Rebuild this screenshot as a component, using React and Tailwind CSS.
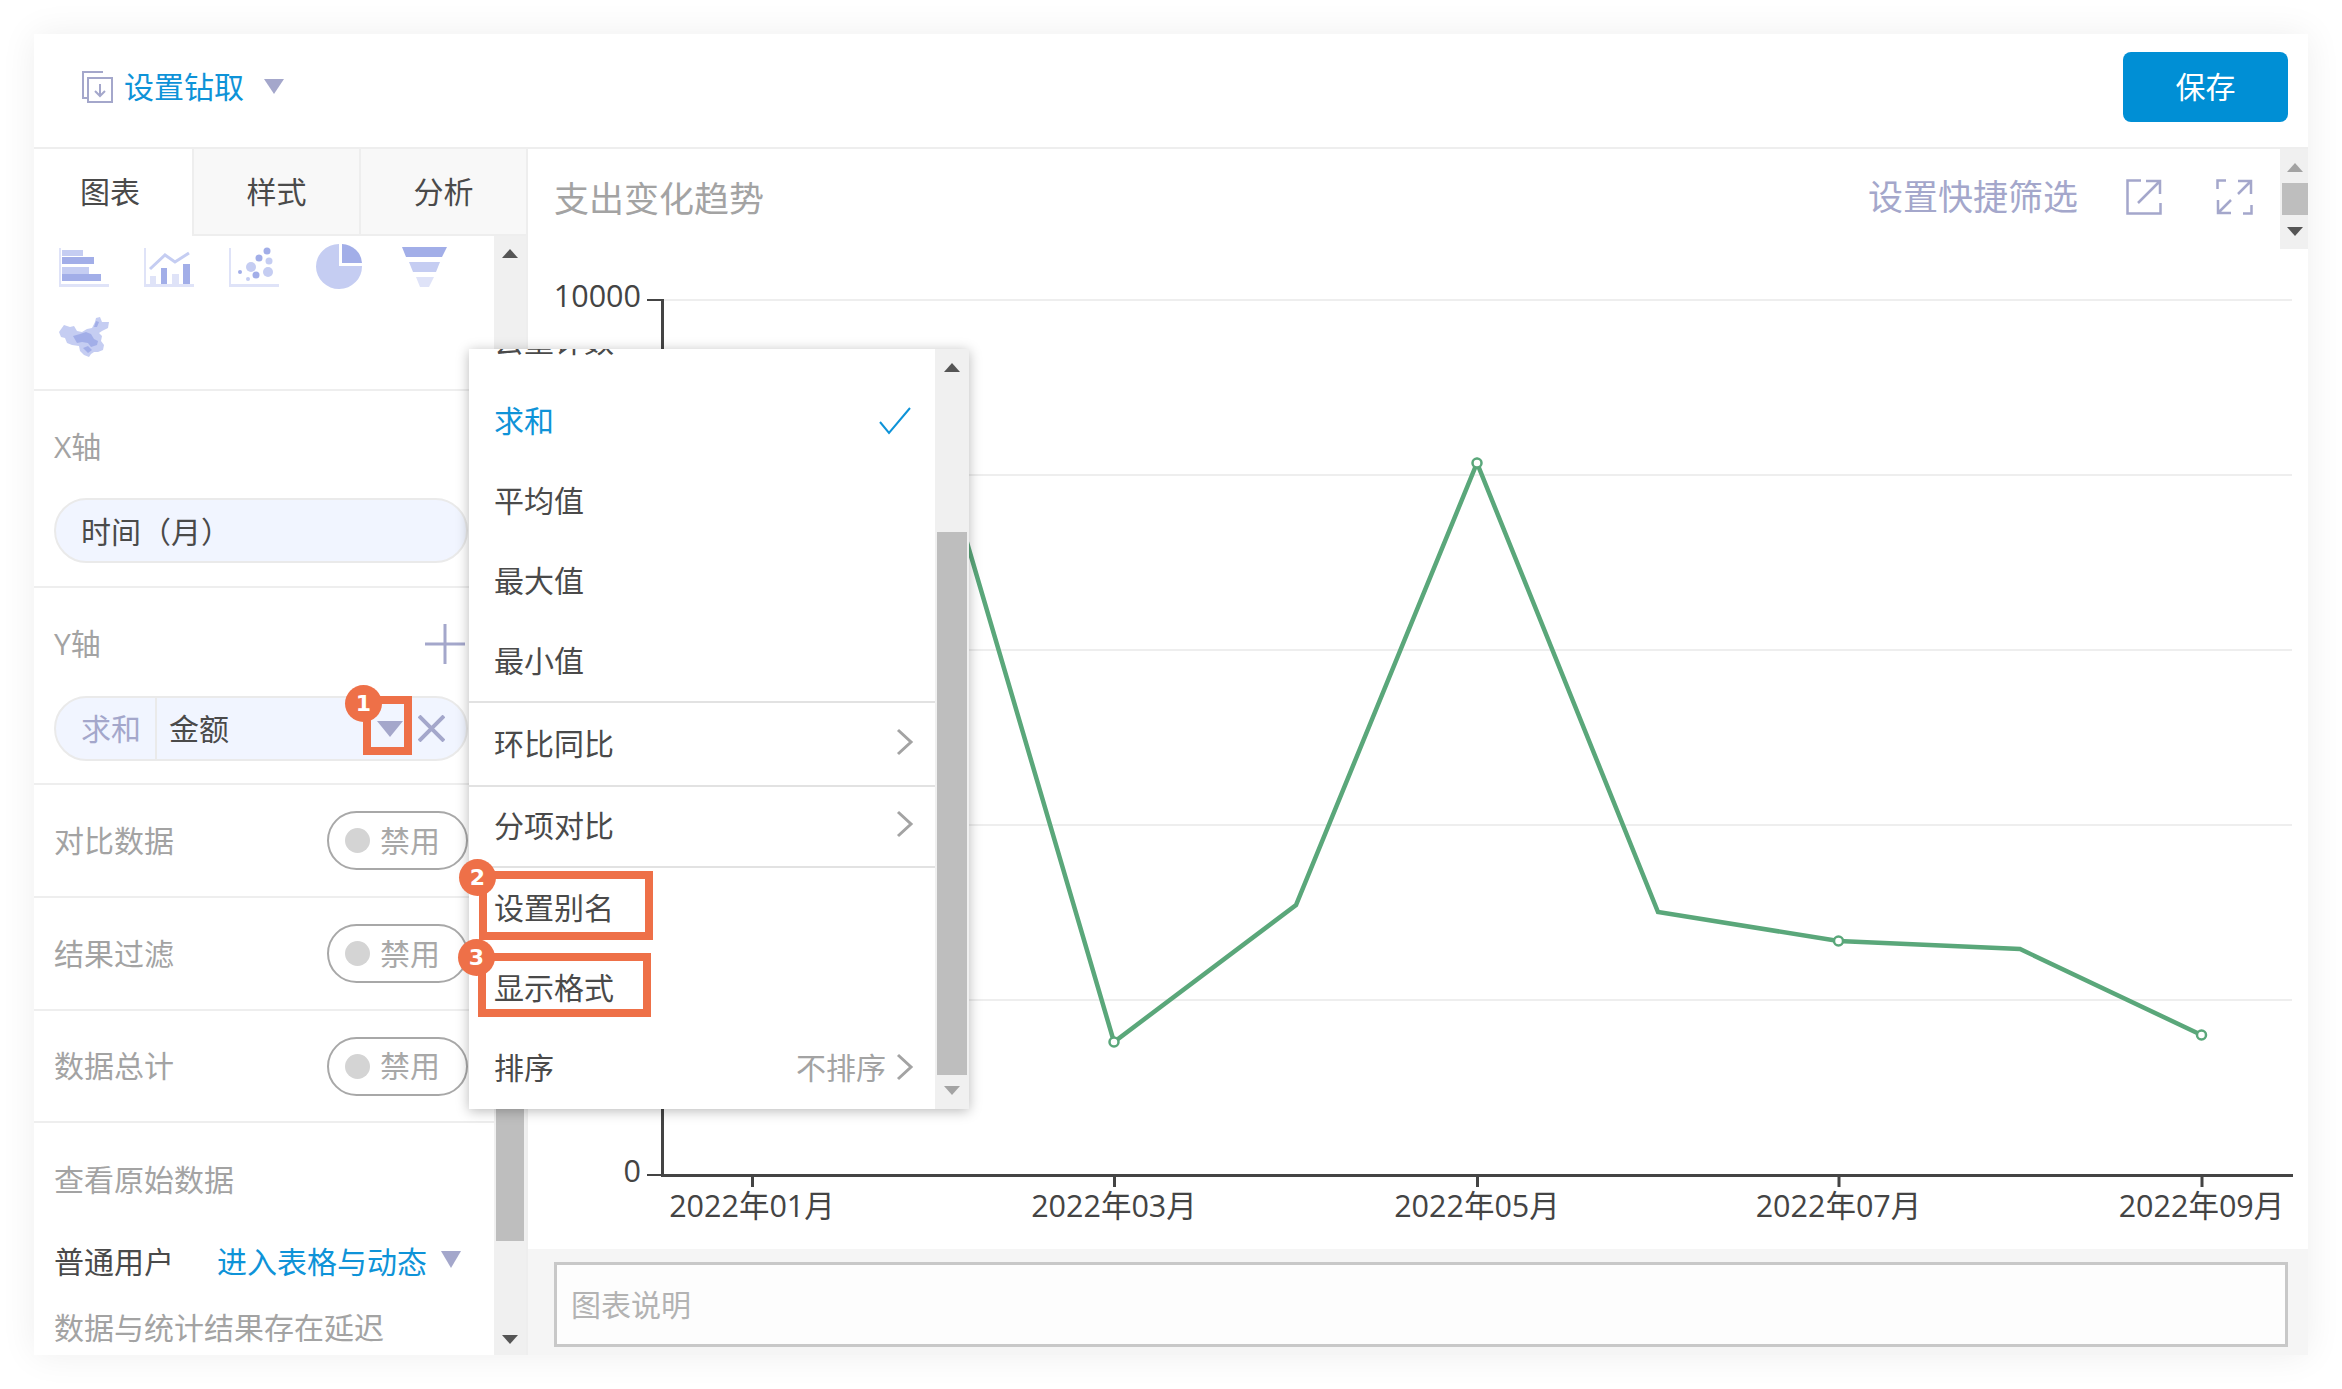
const FONT = '"Open Sans", "Noto Sans CJK SC", sans-serif';

function Tri({ w = 20, h = 15, up, className }) {
  return (
    <svg width={w} height={h} viewBox="0 0 20 15" preserveAspectRatio="none" className={className}>
      <polygon points={up ? "0,15 20,15 10,0" : "0,0 20,0 10,15"} fill="currentColor" />
    </svg>
  );
}

function Chevron({ className = "" }) {
  return (
    <svg width="18" height="28" viewBox="0 0 18 28" className={`text-[#a3a3a3] ${className}`}>
      <polyline points="2,2 15,14 2,26" fill="none" stroke="currentColor" strokeWidth="3" />
    </svg>
  );
}

function Toggle() {
  return (
    <div className="flex h-[59px] w-[141px] items-center rounded-full border-2 border-[#a8a8a8] pl-[16px]">
      <span className="h-[25px] w-[25px] rounded-full bg-[#d4d4d4]" />
      <span className="ml-[10px] text-[30px] leading-[40px] text-[#a8a8a8]">禁用</span>
    </div>
  );
}

function ToggleRow({ label, h = "h-[113px]" }) {
  return (
    <div className={`flex ${h} items-center justify-between border-b-2 border-[#eeeeee] pl-[20px] pr-[26px]`}>
      <span className="text-[30px] leading-[40px] text-[#a3a3a3]">{label}</span>
      <Toggle />
    </div>
  );
}

// chart type icons, all in a 50x50 cell
function BarIcon() {
  return (
    <svg width="50" height="50" viewBox="0 0 50 50">
      <rect x="0" y="6" width="2" height="39" fill="#dfe3f8" />
      <rect x="0" y="42" width="50" height="3" fill="#dfe3f8" />
      <rect x="3" y="8" width="21" height="6" fill="#c5cdf2" />
      <rect x="3" y="15" width="32" height="7" fill="#a2aee8" />
      <rect x="3" y="25" width="27" height="7" fill="#c5cdf2" />
      <rect x="3" y="32" width="39" height="7" fill="#a2aee8" />
    </svg>
  );
}

function LineIcon() {
  return (
    <svg width="50" height="50" viewBox="0 0 50 50">
      <rect x="0" y="6" width="2" height="39" fill="#dfe3f8" />
      <rect x="0" y="42" width="50" height="3" fill="#dfe3f8" />
      <rect x="6" y="34" width="6" height="8" fill="#dfe3f8" />
      <rect x="17" y="26" width="6" height="16" fill="#a2aee8" />
      <rect x="28" y="32" width="7" height="10" fill="#dfe3f8" />
      <rect x="39" y="22" width="7" height="20" fill="#a2aee8" />
      <polyline points="6,27 21,13 31,20 45,11" fill="none" stroke="#c5cdf2" strokeWidth="3" />
    </svg>
  );
}

function DotsIcon() {
  return (
    <svg width="50" height="50" viewBox="0 0 50 50">
      <rect x="0" y="6" width="2" height="39" fill="#dfe3f8" />
      <rect x="0" y="42" width="50" height="3" fill="#dfe3f8" />
      <circle cx="38" cy="9" r="3.500" fill="#a2aee8" />
      <circle cx="30" cy="16" r="3.500" fill="#a2aee8" />
      <circle cx="40" cy="19" r="3.500" fill="#c5cdf2" />
      <circle cx="22" cy="25" r="5" fill="#c5cdf2" />
      <circle cx="39" cy="30" r="5" fill="#c5cdf2" />
      <circle cx="11" cy="30" r="2" fill="#a2aee8" />
      <circle cx="27" cy="33" r="3.500" fill="#a2aee8" />
      <circle cx="19" cy="37" r="2" fill="#c5cdf2" />
    </svg>
  );
}

function PieIcon() {
  return (
    <svg width="50" height="50" viewBox="0 0 50 50">
      <path d="M25 2 A23 22.500 0 1 0 48 24 L25 24 Z" fill="#c5cdf2" />
      <path d="M28 2 A21 20 0 0 1 48 21 L28 21 Z" fill="#a2aee8" />
    </svg>
  );
}

function FunnelIcon() {
  return (
    <svg width="50" height="50" viewBox="0 0 50 50">
      <polygon points="3,5 48,5 43,15 7,15" fill="#a2aee8" />
      <polygon points="10,20 41,20 37,30 14,30" fill="#c5cdf2" />
      <polygon points="17,35 35,35 30,45 21,45" fill="#dfe3f8" />
    </svg>
  );
}

function MapIcon() {
  return (
    <svg width="50" height="50" viewBox="0 -5 50 50">
      <path d="M0 15 L5 8 L11 10 L15 9 L18 14 L23 15 L28 12 L33 11 L36 5 L37 1 L41 0 L43 5 L50 5 L49 11 L43 14 L40 16 L43 19 L42 24 L45 28 L44 33 L39 35 L35 35 L32 37 L30 40 L25 38 L21 34 L20 29 L13 28 L8 26 L6 21 L2 20 Z" fill="#c5cdf2" />
      <path d="M14 19 L21 17 L27 15 L32 17 L35 22 L39 24 L38 28 L32 30 L29 26 L23 25 L18 26 Z" fill="#a2aee8" />
      <path d="M24 31 L29 29 L33 33 L29 36 Z" fill="#a2aee8" />
      <path d="M37 4 L40 5 L38 10 L35 10 Z" fill="#a2aee8" />
    </svg>
  );
}

function DrillIcon() {
  return (
    <svg width="31" height="32" viewBox="0 0 31 32" fill="none" stroke="#a4a7cb" strokeWidth="2">
      <path d="M21 1 H1 V27 H5" />
      <rect x="6" y="7" width="24" height="24" />
      <path d="M18 13 V25 M13 20 L18 25 L23 20" />
    </svg>
  );
}

function OpenIcon() {
  return (
    <svg width="36" height="36" viewBox="0 0 36 36" fill="none" stroke="#a4a7cb" strokeWidth="2.500">
      <path d="M15 1.500 H1.500 V34.500 H34.500 V24" />
      <path d="M12 24 L33 3 M20 2 H34 V15" />
    </svg>
  );
}

function ExpandIcon() {
  return (
    <svg width="37" height="36" viewBox="0 0 37 36" fill="none" stroke="#a4a7cb" strokeWidth="2.500">
      <path d="M10 1.500 H1.500 V10 M27 34.500 H35.500 V26" />
      <path d="M22 2 H35 V15 M35 2 L22 15" />
      <path d="M2 21 V34 H15 M2 34 L15 21" />
    </svg>
  );
}

function MenuItem({ label, active, check, h = "h-[80px]", pad = "", children }) {
  return (
    <div className={`flex ${h} ${pad} shrink-0 items-center justify-between pl-[25px] pr-[21px]`}>
      <span className={`text-[30px] leading-[40px] ${active ? "text-[#0e93d8]" : "text-[#4a4a4a]"}`}>{label}</span>
      {check && (
        <svg width="32" height="28" viewBox="0 0 32 28" className="mr-[3px]">
          <polyline points="1,15 10,26 31,1" fill="none" stroke="#0e93d8" strokeWidth="2" />
        </svg>
      )}
      {children}
    </div>
  );
}

function Badge({ n, className }) {
  return (
    <div
      className={`absolute flex h-[37px] w-[37px] items-center justify-center rounded-full bg-[#ee7048] text-[22px] font-bold leading-none text-white ${className}`}
      style={{ fontFamily: '"DejaVu Sans", sans-serif' }}
    >
      {n}
    </div>
  );
}

const points = [
  [752, 520],
  [933, 427],
  [1114, 1042],
  [1296, 905],
  [1477, 463],
  [1658, 912],
  [1838.5, 941],
  [2020, 949],
  [2201.5, 1035],
];
const gridY = [300, 475, 650, 825, 1000];
const months = [
  [752, "2022年01月"],
  [1114, "2022年03月"],
  [1477, "2022年05月"],
  [1838.5, "2022年07月"],
  [2201.5, "2022年09月"],
];

function Chart() {
  return (
    <svg width="1780" height="1000" viewBox="528 249 1780 1000" className="block" style={{ fontFamily: FONT }}>
      {gridY.map((y) => (
        <rect key={y} x="662" y={y - 1} width="1630" height="2" fill="#eeeeee" />
      ))}
      <rect x="661" y="299" width="3" height="877" fill="#444444" />
      <rect x="647" y="299" width="15" height="2" fill="#444444" />
      <rect x="647" y="1174" width="15" height="2" fill="#444444" />
      <rect x="661" y="1174" width="1632" height="3" fill="#444444" />
      <text x="641" y="307" textAnchor="end" fontSize="30.5" fill="#444444">10000</text>
      <text x="641" y="1182" textAnchor="end" fontSize="30.5" fill="#444444">0</text>
      {months.map(([x, label]) => (
        <g key={x}>
          <rect x={x - 1} y="1175" width="3" height="12" fill="#444444" />
          <text x={x} y="1217" textAnchor="middle" fontSize="30.5" fill="#444444">{label}</text>
        </g>
      ))}
      <polyline points={points.map((p) => p.join(",")).join(" ")} fill="none" stroke="#5aa77a" strokeWidth="4.500" />
      {points.map(([x, y], i) =>
        i % 2 === 0 ? <circle key={x} cx={x} cy={y} r="4.500" fill="white" stroke="#5aa77a" strokeWidth="2.500" /> : null
      )}
    </svg>
  );
}

export default function App() {
  return (
    <div className="h-[1389px] w-[2342px] overflow-hidden bg-white pl-[34px] pt-[34px]" style={{ fontFamily: FONT }}>
      <div className="relative flex h-[1321px] w-[2274px] flex-col bg-white shadow-[0_0_34px_rgba(0,0,0,0.07)]">
        {/* header */}
        <div className="flex h-[115px] shrink-0 items-center border-b-2 border-[#eeeeee] pb-[8px] pl-[48px] pr-[20px]">
          <DrillIcon />
          <span className="ml-[11px] text-[30px] leading-[40px] text-[#0e93d8]">设置钻取</span>
          <Tri className="ml-[20px] text-[#a4a7cb]" />
          <button className="ml-auto h-[70px] w-[165px] rounded-[8px] bg-[#008fd5] text-[30px] text-white">保存</button>
        </div>

        <div className="flex min-h-0 flex-1">
          {/* left panel */}
          <div className="flex w-[494px] shrink-0 flex-col border-r-2 border-[#eeeeee]">
            <div className="flex h-[87px] shrink-0 text-[30px] text-[#4a4a4a]">
              <div className="flex w-[160px] items-center justify-center border-r-2 border-[#eeeeee] pb-[3px] pr-[6px]">图表</div>
              <div className="flex w-[167px] items-center justify-center border-b-2 border-r-2 border-[#eeeeee] bg-[#f8f8f8] pb-[1px]">样式</div>
              <div className="flex flex-1 items-center justify-center border-b-2 border-[#eeeeee] bg-[#f8f8f8] pb-[1px]">分析</div>
            </div>
            <div className="flex min-h-0 flex-1">
              <div className="min-w-0 flex-1 overflow-hidden">
                <div className="flex h-[155px] flex-wrap content-start gap-x-[35px] gap-y-[20px] border-b-2 border-[#eeeeee] pl-[25px] pt-[6px]">
                  <BarIcon />
                  <LineIcon />
                  <DotsIcon />
                  <PieIcon />
                  <FunnelIcon />
                  <MapIcon />
                </div>
                <div className="h-[197px] border-b-2 border-[#eeeeee] pl-[20px] pr-[26px] pt-[36px]">
                  <div className="h-[40px] text-[30px] leading-[40px] text-[#a3a3a3]">X轴</div>
                  <div className="mt-[31px] flex h-[65px] items-center rounded-full border-2 border-[#eaeaea] bg-[#f1f5ff] pl-[25px] pt-[2px] text-[30px] text-[#4a4a4a]">时间（月）</div>
                </div>
                <div className="h-[197px] border-b-2 border-[#eeeeee] pl-[20px] pr-[26px] pt-[36px]">
                  <div className="flex h-[40px] items-center justify-between text-[30px] leading-[40px] text-[#a3a3a3]">
                    Y轴
                    <svg width="40" height="40" viewBox="0 0 40 40" className="mr-[3px]">
                      <path d="M20 0 V40 M0 20 H40" stroke="#a4a7cb" strokeWidth="3" />
                    </svg>
                  </div>
                  <div className="mt-[32px] flex h-[65px] items-center rounded-full border-2 border-[#eaeaea] bg-[#f1f5ff] text-[30px]">
                    <span className="flex h-full w-[101px] items-center justify-end border-r-2 border-[#eaeaea] pr-[14px] text-[#a4a7cb]">求和</span>
                    <span className="ml-[12px] text-[#4a4a4a]">金额</span>
                    <Tri w={26} h={16} className="ml-auto text-[#a4a7cb]" />
                    <svg width="27" height="27" viewBox="0 0 27 27" className="ml-[15px] mr-[21px]">
                      <path d="M1 1 L26 26 M26 1 L1 26" stroke="#a4a7cb" strokeWidth="4" />
                    </svg>
                  </div>
                </div>
                <ToggleRow label="对比数据" />
                <ToggleRow label="结果过滤" />
                <ToggleRow label="数据总计" h="h-[112px]" />
                <div className="mt-[37px] pl-[20px] text-[30px] leading-[40px] text-[#a3a3a3]">查看原始数据</div>
                <div className="mt-[42px] flex h-[40px] items-center pl-[20px] text-[30px] leading-[40px]">
                  <span className="text-[#4a4a4a]">普通用户</span>
                  <span className="ml-[43px] text-[#0e93d8]">进入表格与动态</span>
                  <Tri w={20} h={17} className="mb-[6px] ml-[14px] text-[#a4a7cb]" />
                </div>
                <div className="mt-[26px] whitespace-nowrap pl-[20px] text-[30px] leading-[40px] text-[#a3a3a3]">数据与统计结果存在延迟</div>
              </div>
              {/* left scrollbar */}
              <div className="flex w-[32px] shrink-0 flex-col items-center bg-[#f0f0f0] pt-[13px] text-[#555555]">
                <Tri up w={16} h={9} />
                <div className="mt-[300px] h-[683px] w-[28px] bg-[#bebebe]" />
                <Tri w={16} h={9} className="mt-[94px]" />
              </div>
            </div>
          </div>

          {/* chart panel */}
          <div className="flex min-w-0 flex-1 flex-col">
            <div className="flex h-[100px] shrink-0 items-center pl-[26px]">
              <span className="text-[35px] leading-[48px] text-[#a3a3a3]">支出变化趋势</span>
              <span className="mb-[4px] ml-auto text-[35px] leading-[48px] text-[#a4a7cb]">设置快捷筛选</span>
              <span className="mb-[4px] ml-[48px]"><OpenIcon /></span>
              <span className="mb-[4px] ml-[54px]"><ExpandIcon /></span>
              <div className="ml-[27px] flex h-[100px] w-[28px] shrink-0 flex-col items-center bg-[#f0f0f0] pl-[2px] pt-[14px]">
                <Tri up w={16} h={9} className="text-[#a3a3a3]" />
                <div className="mt-[11px] h-[32px] w-full bg-[#bebebe]" />
                <Tri w={16} h={9} className="mt-[12px] text-[#555555]" />
              </div>
            </div>
            <Chart />
            <div className="flex min-h-0 flex-1 bg-[#f5f5f5] pb-[8px] pl-[26px] pr-[20px] pt-[13px]">
              <div className="flex flex-1 items-center border-[3px] border-[#c8c8c8] bg-[#fdfdfd] pl-[14px] text-[30px] text-[#b3b3b3]">图表说明</div>
            </div>
          </div>
        </div>

        {/* dropdown */}
        <div className="absolute left-[435px] top-[315px] flex h-[760px] w-[500px] overflow-hidden bg-white shadow-[0_2px_12px_rgba(0,0,0,0.28)]">
          <div className="flex min-w-0 flex-1 flex-col">
            <div className="mt-[-48px]">
              <MenuItem label="去重计数" />
            </div>
            <MenuItem label="求和" active check />
            <MenuItem label="平均值" />
            <MenuItem label="最大值" />
            <MenuItem label="最小值" />
            <div className="h-[2px] shrink-0 bg-[#e2e2e2]" />
            <MenuItem label="环比同比" h="h-[82px]"><Chevron className="mb-[4px]" /></MenuItem>
            <div className="h-[2px] shrink-0 bg-[#e2e2e2]" />
            <MenuItem label="分项对比" h="h-[79px]" pad="pb-[2px]"><Chevron className="mb-[3px]" /></MenuItem>
            <div className="h-[2px] shrink-0 bg-[#e2e2e2]" />
            <MenuItem label="设置别名" />
            <MenuItem label="显示格式" />
            <MenuItem label="排序">
              <span className="ml-auto mr-[10px] text-[30px] leading-[40px] text-[#a3a3a3]">不排序</span>
              <Chevron className="mb-[2px]" />
            </MenuItem>
          </div>
          <div className="flex w-[34px] shrink-0 flex-col items-center bg-[#f0f0f0] pt-[14px]">
            <Tri up w={16} h={9} className="text-[#555555]" />
            <div className="mt-[160px] h-[543px] w-[30px] bg-[#bebebe]" />
            <Tri w={16} h={9} className="mt-[11px] text-[#a3a3a3]" />
          </div>
        </div>

        {/* annotations */}
        <div className="absolute left-[329px] top-[662px] h-[59px] w-[49px] border-[8px] border-[#ee7048]" />
        <div className="absolute left-[445px] top-[837px] h-[69px] w-[174px] border-[8px] border-[#ee7048]" />
        <div className="absolute left-[444px] top-[919px] h-[64px] w-[173px] border-[8px] border-[#ee7048]" />
        <Badge n="1" className="left-[311px] top-[651px]" />
        <Badge n="2" className="left-[425px] top-[825px]" />
        <Badge n="3" className="left-[424px] top-[905px]" />
      </div>
    </div>
  );
}
